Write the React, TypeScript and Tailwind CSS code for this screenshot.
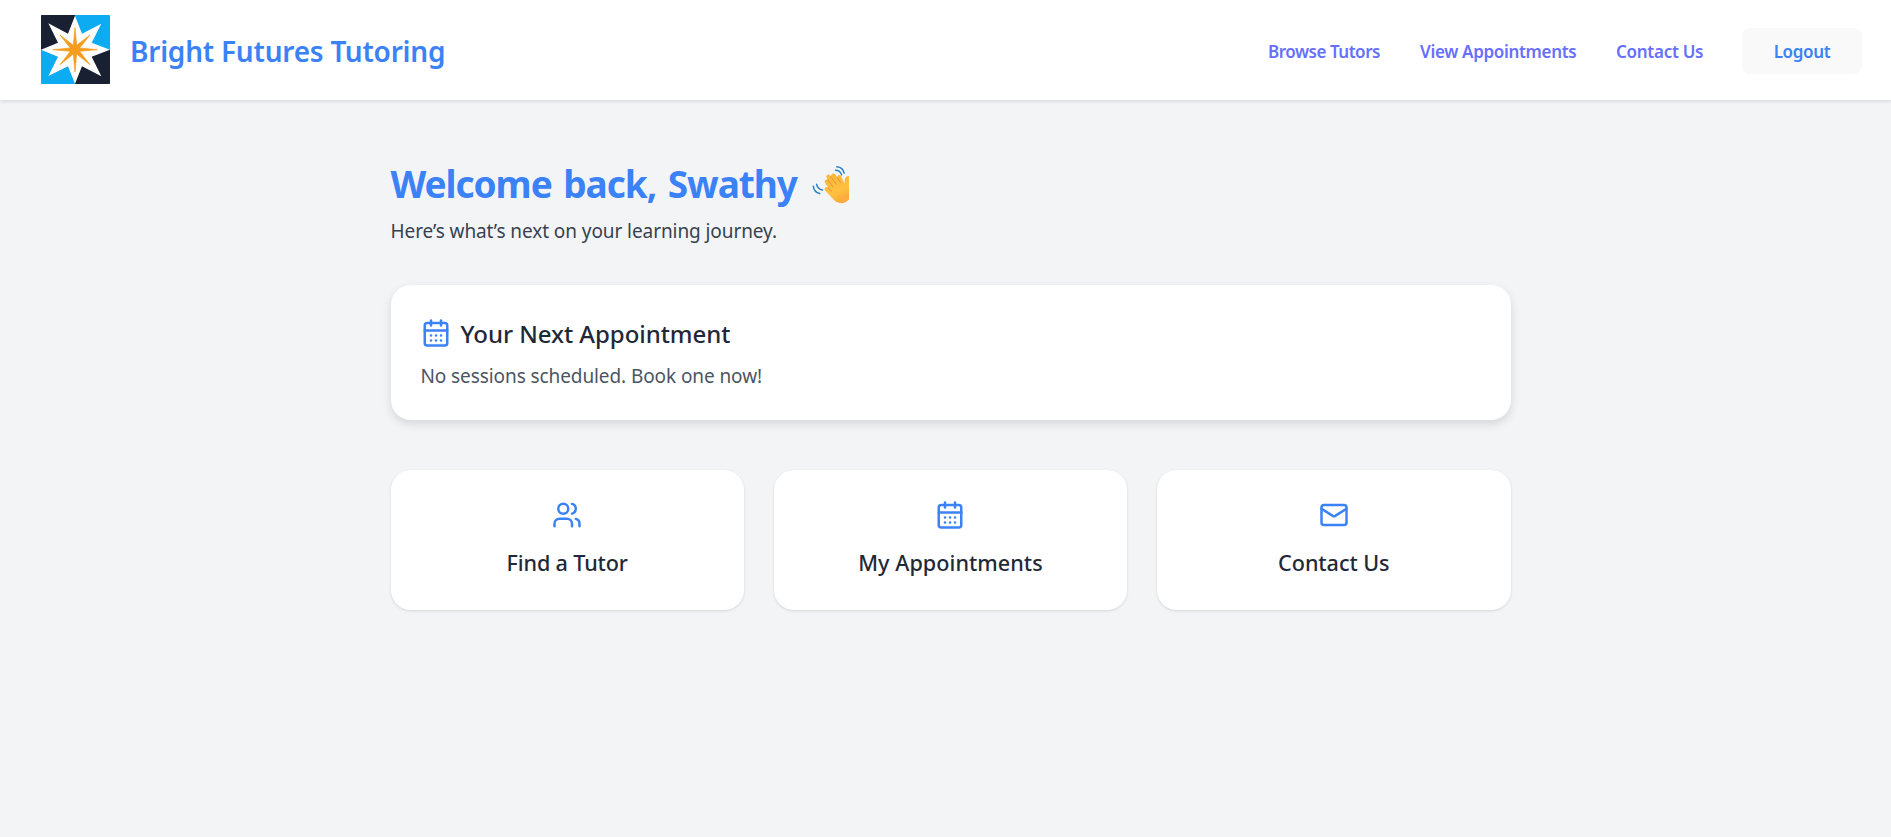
import type { ReactNode } from "react";
import { CalendarDays, Mail, Users } from "lucide-react";

function Logo() {
  return (
    <svg viewBox="0 0 207 207" className="size-[69px] shrink-0" aria-hidden="true">
      <rect width="207" height="207" rx="3" fill="#0cabf2" />
      <path d="M3 0H102V104H0V3Q0 0 3 0Z" fill="#182032" />
      <path d="M102 104H207V204Q207 207 204 207H102Z" fill="#182032" />
      <path
        d="M102 2L123 56L181 26L152 83L207 104L152 125L181 184L123 154L102 206L81 154L22 183L51 125L0 104L51 83L22 25L81 56Z"
        fill="#fdfdfc"
      />
      <path
        d="M102 38L107 91L147 60L116 99L169 104L116 109L147 149L107 117L102 171L97 117L57 149L88 109L35 104L88 99L57 60L97 91Z"
        fill="#f59c1c"
        stroke="#f59c1c"
        strokeWidth="2"
      />
    </svg>
  );
}

function WavingHand() {
  return (
    <svg viewBox="0 0 41 44" className="h-11 w-[41px] shrink-0" aria-hidden="true">
      <defs>
        <linearGradient id="skin" x1="0" y1="0" x2="0.4" y2="1">
          <stop offset="0" stopColor="#f6b73c" />
          <stop offset="0.7" stopColor="#ffc03f" />
          <stop offset="1" stopColor="#fbac3c" />
        </linearGradient>
      </defs>
      <path
        d="M17 20.500c-1.200-1.600.8-4 2.800-2.400l-1.200-2.500c-1-2.500 2-4.200 3.600-2.200l1 1.300c-.8-2.800 2.500-4.300 4.200-2.200l2 3c-.6-2.600 2.600-3.600 3.800-1.300l3.300 7.300c.2-2.800 0-5.400 1.800-6.800 1.200-.9 2.200-.7 2.700-.4V37.500c-3.400 4.300-9.600 4.800-14 1.600L17.500 29c-2.200-1.800.2-4.800 2.400-3.200l.4.300Z"
        fill="url(#skin)"
      />
      <path
        d="M19.800 18l5.200 7M23 14.600l5.200 7.500M29.400 15.500l3 5M20 26l3.500 3"
        fill="none"
        stroke="#e58f2c"
        strokeWidth="0.9"
        strokeLinecap="round"
      />
      <path
        d="M8.500 22.200c.7 3.300 2.800 5.300 6 5.900M5.300 24.300c.5 3.700 2.800 6.200 6.400 7.200M27.500 8.200c3 0 5.200 1.700 6.100 4.700M28.800 4.700c4 .3 6.600 2.600 7.300 6.500"
        fill="none"
        stroke="#2a83c4"
        strokeWidth="1.5"
        strokeLinecap="round"
      />
    </svg>
  );
}

function ActionCard({ icon, children }: { icon: ReactNode; children: ReactNode }) {
  return (
    <a
      href="#"
      className="flex h-[140px] flex-col items-center gap-[18px] rounded-[20px] bg-white pt-[30px] text-[21.6px] leading-[30px] font-medium text-[#1f2937] shadow-[0_1px_3px_rgba(0,0,0,0.12)]"
    >
      {icon}
      {children}
    </a>
  );
}

export default function App() {
  return (
    <div className="min-h-screen bg-[#f3f4f6] font-['Noto_Sans','Open_Sans',sans-serif]">
      <header className="flex h-[100px] items-center justify-between bg-white pr-[29px] pl-[41px] shadow-[0_1px_4px_rgba(0,0,0,0.15)]">
        <div className="flex items-center gap-5 pb-px">
          <Logo />
          <span className="pt-0.5 text-[28px] leading-10 font-semibold tracking-[-0.22px] text-[#3b82f6]">
            Bright Futures Tutoring
          </span>
        </div>
        <nav className="flex items-center pt-0.5 text-[17px] font-semibold whitespace-nowrap text-[#6670fb]">
          <a href="#" className="w-[152px] pt-0.5 tracking-[-0.47px]">Browse Tutors</a>
          <a href="#" className="w-[196px] pt-0.5 tracking-[-0.32px]">View Appointments</a>
          <a href="#" className="w-[126px] pt-0.5 tracking-[-0.28px]">Contact Us</a>
          <button className="h-[46px] w-[120px] rounded-lg bg-[#f9f9f9] pt-0.5 font-semibold tracking-[-0.32px] text-[#3b82f6]">
            Logout
          </button>
        </nav>
      </header>

      <main className="ml-[390.5px] w-[1120px] pt-[62px]">
        <h1 className="flex h-11 items-center text-[37px] leading-[44px] font-bold whitespace-nowrap text-[#3b82f6]">
          <span className="w-[417.5px] tracking-[-1.05px] [word-spacing:3px]">Welcome back, Swathy</span>
          <WavingHand />
        </h1>
        <p className="mt-[11px] text-[19px] leading-7 tracking-[-0.08px] text-[#374151]">
          Here’s what’s next on your learning journey.
        </p>

        <section className="mt-10 h-[135px] rounded-[20px] bg-white p-[30px] shadow-[0_4px_10px_rgba(0,0,0,0.12)]">
          <h2 className="flex h-9 items-center gap-2.5 text-2xl leading-9 font-medium tracking-[-0.05px] text-[#1f2937]">
            <CalendarDays size={30} className="text-[#3b82f6]" />
            <span className="pt-0.5">Your Next Appointment</span>
          </h2>
          <p className="mt-[11px] text-[19px] leading-7 tracking-[-0.09px] text-[#4b5563]">
            No sessions scheduled. Book one now!
          </p>
        </section>

        <div className="mt-[50px] grid grid-cols-3 gap-[30px]">
          <ActionCard icon={<Users size={30} className="text-[#3b82f6]" />}>
            <span className="tracking-[-0.14px]">Find a Tutor</span>
          </ActionCard>
          <ActionCard icon={<CalendarDays size={30} className="text-[#3b82f6]" />}>
            <span className="tracking-[0.05px]">My Appointments</span>
          </ActionCard>
          <ActionCard icon={<Mail size={30} className="text-[#3b82f6]" />}>
            <span className="tracking-[-0.05px]">Contact Us</span>
          </ActionCard>
        </div>
      </main>
    </div>
  );
}
